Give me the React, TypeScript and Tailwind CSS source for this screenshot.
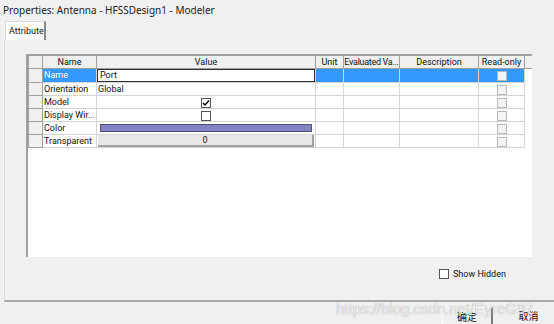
import React from 'react';

const rows = [
  { name: 'Name', kind: 'text', value: 'Port', selected: true },
  { name: 'Orientation', kind: 'plain', value: 'Global' },
  { name: 'Model', kind: 'check', checked: true },
  { name: 'Display Wir...', kind: 'check', checked: false },
  { name: 'Color', kind: 'color' },
  { name: 'Transparent', kind: 'button', value: '0' },
];

function CheckBox({ checked, disabled }: { checked?: boolean; disabled?: boolean }) {
  return (
    <span
      className={`inline-flex w-[10px] h-[10px] items-center justify-center border ${
        disabled ? 'border-[#b8b8b8] bg-[#f4f4f4]' : 'border-[#555] bg-white'
      }`}
    >
      {checked && (
        <svg width="8" height="8" viewBox="0 0 8 8">
          <path d="M1 4 L3 6 L7 1.5" stroke="#000" strokeWidth="1.4" fill="none" />
        </svg>
      )}
    </span>
  );
}

export default function App() {
  const th = 'h-[13px] p-0 border border-[#a0a0a0] bg-[#f0f0f0] font-normal text-center leading-[11px] whitespace-nowrap overflow-hidden';
  const td = 'h-[13px] p-0 border border-[#d4d4d4] leading-[11px] whitespace-nowrap overflow-hidden';
  return (
    <div className="relative w-[554px] h-[324px] overflow-hidden bg-[#f0f0f0] text-[9px] leading-[12px] text-[#111] font-['Roboto','Liberation_Sans',sans-serif]">
      {/* title */}
      <div className="h-[21px] pl-[3px] pt-[4px] text-[10px] text-[#222] font-['Noto_Sans','Liberation_Sans',sans-serif] leading-[13px]">
        Properties: Antenna - HFSSDesign1 - Modeler
      </div>

      {/* tabs */}
      <div className="flex h-[19px] pl-[5px]">
        <div className="h-[19px] w-[41px] bg-white border-l border-t border-[#d9d9d9] border-r-2 border-r-[#8a8a8a] flex items-center pl-[3px]">
          Attribute
        </div>
      </div>

      {/* panel */}
      <div className="ml-[4px] w-[560px] h-[262px] border-l border-[#dcdcdc] border-b-2 border-b-[#a8a8a8] pl-[21px] pt-[14px]">
        <div className="w-[506px] h-[203px] bg-white border-l-2 border-t border-[#a0a0a0] overflow-hidden">
          <table className="w-[504px] table-fixed border-collapse">
            <colgroup>
              <col className="w-[14px]" />
              <col className="w-[54px]" />
              <col className="w-[219px]" />
              <col className="w-[28px]" />
              <col className="w-[56px]" />
              <col className="w-[79px]" />
              <col className="w-[46px]" />
              <col className="w-[8px]" />
            </colgroup>
            <thead>
              <tr>
                <th className={th}></th>
                <th className={th}>Name</th>
                <th className={th}>Value</th>
                <th className={th}>Unit</th>
                <th className={`${th} tracking-[-0.3px]`}>Evaluated Va...</th>
                <th className={th}>Description</th>
                <th className={th}>Read-only</th>
                <th className={th}></th>
              </tr>
            </thead>
            <tbody>
              {rows.map((r) => {
                const sel = r.selected ? 'bg-[#3399ff]' : '';
                return (
                  <tr key={r.name}>
                    <td className="h-[13px] p-0 border border-[#a0a0a0] bg-[#f0f0f0]"></td>
                    <td className={`${td} pl-[1px] ${r.selected ? 'bg-[#3399ff] text-white' : ''}`}>
                      {r.name}
                    </td>
                    <td className={`${td} relative`}>
                      {r.kind === 'text' && (
                        <div className="h-[13px] border border-[#303030] pl-[2px] leading-[11px] bg-white">{r.value}</div>
                      )}
                      {r.kind === 'plain' && <div className="pl-[1px]">{r.value}</div>}
                      {r.kind === 'check' && (
                        <div className="flex justify-center pt-[1px]">
                          <CheckBox checked={r.checked} />
                        </div>
                      )}
                      {r.kind === 'color' && (
                        <div className="px-[3px] py-[2px]">
                          <div className="h-[8px] bg-[#8482c0] border border-[#505070]"></div>
                        </div>
                      )}
                      {r.kind === 'button' && (
                        <div className="h-[12px] mx-[1px] bg-[#e8e8e8] border-r-2 border-b-2 border-[#a0a0a0] text-center leading-[10px]">
                          {r.value}
                        </div>
                      )}
                    </td>
                    <td className={`${td} ${sel}`}></td>
                    <td className={`${td} ${sel}`}></td>
                    <td className={`${td} ${sel}`}></td>
                    <td className={`${td} ${sel}`}>
                      <div className="flex justify-center pt-[1px]">
                        <CheckBox disabled />
                      </div>
                    </td>
                    <td className="p-0"></td>
                  </tr>
                );
              })}
            </tbody>
          </table>
        </div>

        <div className="flex items-center gap-[4px] pl-[413px] pt-[11px]">
          <CheckBox />
          <span>Show Hidden</span>
        </div>
      </div>

      {/* buttons */}
      <div className="flex pl-[442px] pt-[5px] gap-[10px]">
        <div className="w-[56px] h-[22px] bg-[#f0f0f0] border-l border-t border-white border-r-2 border-r-[#7a7a7a] flex justify-center pt-[3px] text-[10px] leading-[12px] font-['Noto_Sans_CJK_SC',sans-serif]">
          确定
        </div>
        <div className="w-[56px] h-[22px] bg-[#f0f0f0] flex justify-center pt-[3px] text-[10px] leading-[12px] font-['Noto_Sans_CJK_SC',sans-serif]">
          取消
        </div>
      </div>

      {/* watermark */}
      <div className="absolute left-[336px] top-[300px] text-[15px] leading-[18px] text-white/80 font-['Liberation_Sans',sans-serif] [text-shadow:0_0_1px_#888]">
        https://blog.csdn.net/EyreG97
      </div>
    </div>
  );
}
